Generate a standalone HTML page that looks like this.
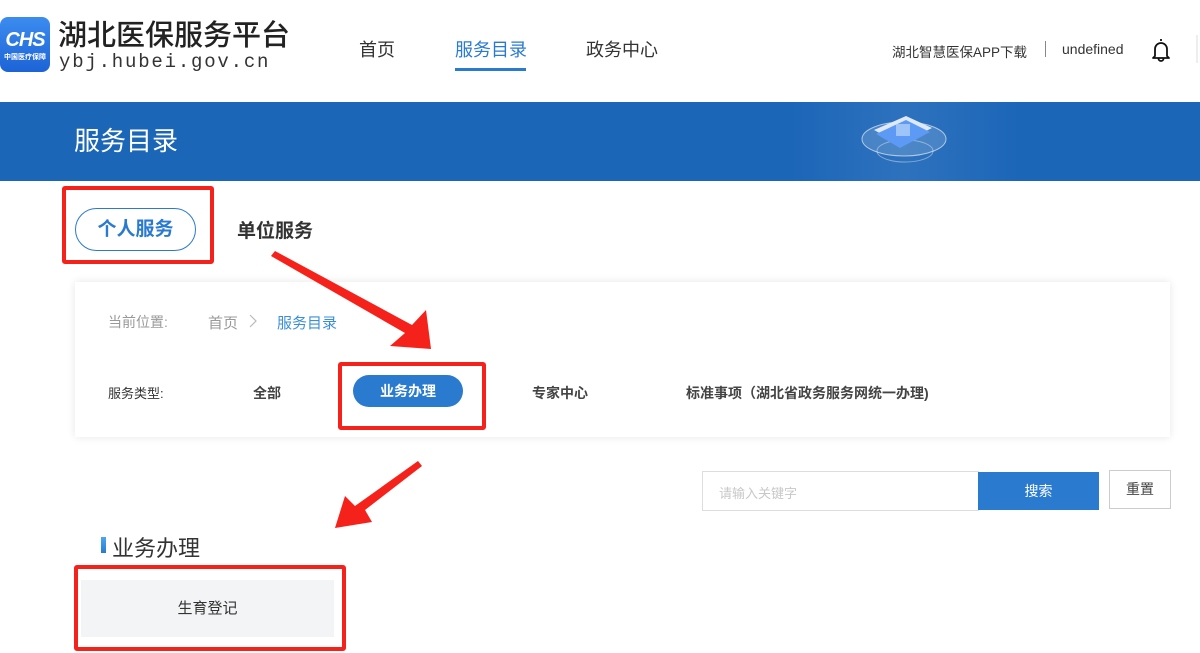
<!DOCTYPE html>
<html><head><meta charset="utf-8">
<style>
*{margin:0;padding:0;box-sizing:border-box}
body{width:1200px;height:653px;overflow:hidden;background:#fff;font-family:"Liberation Sans","Noto Sans CJK SC",sans-serif;position:relative;color:#333}
.a{position:absolute;white-space:nowrap}
.rb{position:absolute;border:4px solid #f5221b;border-radius:3px}
</style></head><body>
<div class="a" style="left:0;top:17px;width:50px;height:55px;border-radius:8px;background:linear-gradient(#3b8cf0,#1d63d6);color:#fff;text-align:center">
 <div style="font:italic 900 20px 'Liberation Sans',sans-serif;margin-top:12px;letter-spacing:-1px">CHS</div>
 <div style="font-size:7px;margin-top:0px;font-weight:bold">中国医疗保障</div>
</div>
<div class="a" style="left:58px;top:12px;font-size:29px;font-weight:500;color:#222;letter-spacing:0px">湖北医保服务平台</div>
<div class="a" style="left:59px;top:51px;font:19px 'Liberation Mono',monospace;color:#333;letter-spacing:1.8px">ybj.hubei.gov.cn</div>

<div class="a" style="left:359px;top:36px;font-size:18px;color:#333">首页</div>
<div class="a" style="left:455px;top:36px;font-size:18px;color:#2a7ad0">服务目录</div>
<div class="a" style="left:455px;top:68px;width:71px;height:3px;background:#2a7ad0"></div>
<div class="a" style="left:586px;top:36px;font-size:18px;color:#333">政务中心</div>

<div class="a" style="left:892px;top:41px;font-size:13.5px;color:#333">湖北智慧医保APP下载</div>
<div class="a" style="left:1045px;top:41px;width:1px;height:16px;background:#888"></div>
<div class="a" style="left:1062px;top:41px;font-size:14px;color:#333">undefined</div>
<svg class="a" style="left:1150px;top:37px" width="22" height="26" viewBox="0 0 22 26"><path d="M11 2v2M5 19V12a6 6 0 0 1 12 0v7l2 2H3z" fill="none" stroke="#111" stroke-width="1.8" stroke-linejoin="round"/><path d="M8.5 21.5a2.5 2.5 0 0 0 5 0" fill="none" stroke="#111" stroke-width="1.8"/></svg>
<div class="a" style="left:1196px;top:35px;width:2px;height:28px;background:#eee"></div>

<div class="a" style="left:0;top:102px;width:1200px;height:79px;background:#1c66b8;overflow:hidden">
 <div style="position:absolute;left:790px;top:0;width:230px;height:79px;background:linear-gradient(90deg,rgba(255,255,255,0),rgba(255,255,255,.08),rgba(255,255,255,0))"></div>
 <svg style="position:absolute;left:860px;top:12px" width="90" height="60" viewBox="0 0 90 60"><ellipse cx="44" cy="25" rx="42" ry="17" fill="rgba(255,255,255,.15)" stroke="rgba(255,255,255,.6)"/><ellipse cx="45" cy="37" rx="28" ry="11" fill="none" stroke="rgba(255,255,255,.4)"/><polygon points="14,16 46,2 72,14 40,30" fill="#dfe9fb"/><polygon points="16,20 46,6 70,18 40,34" fill="#5d9af5"/><rect x="36" y="10" width="14" height="12" fill="#bcd5fb" opacity=".7"/></svg>
</div>
<div class="a" style="left:74px;top:121px;font-size:26px;color:#fff">服务目录</div>

<div class="a" style="left:75px;top:208px;width:121px;height:43px;border:1px solid #2a7ad0;border-radius:22px;color:#2a7ad0;font-size:19px;font-weight:bold;text-align:center;line-height:41px">个人服务</div>
<div class="a" style="left:237px;top:216px;font-size:19px;font-weight:bold;color:#333">单位服务</div>
<div class="rb" style="left:62px;top:186px;width:152px;height:78px"></div>

<div class="a" style="left:75px;top:282px;width:1095px;height:155px;background:#fff;box-shadow:0 0 8px rgba(0,0,0,.1)"></div>
<div class="a" style="left:108px;top:312px;font-size:14px;color:#999">当前位置:</div>
<div class="a" style="left:208px;top:312px;font-size:15px;color:#999">首页</div>
<svg class="a" style="left:248px;top:314px" width="10" height="14"><path d="M2 1l6 6-6 6" fill="none" stroke="#bbb" stroke-width="1.2"/></svg>
<div class="a" style="left:277px;top:312px;font-size:15px;color:#3b8fd8">服务目录</div>
<div class="a" style="left:108px;top:383px;font-size:13px;color:#333">服务类型:</div>
<div class="a" style="left:253px;top:383px;font-size:14px;font-weight:bold;color:#444">全部</div>
<div class="a" style="left:353px;top:375px;width:110px;height:32px;border-radius:16px;background:#2a7ad0;color:#fff;font-size:14px;font-weight:bold;text-align:center;line-height:32px">业务办理</div>
<div class="rb" style="left:338px;top:362px;width:148px;height:68px"></div>
<div class="a" style="left:532px;top:383px;font-size:14px;font-weight:bold;color:#444">专家中心</div>
<div class="a" style="left:686px;top:383px;font-size:14px;font-weight:bold;color:#444">标准事项（湖北省政务服务网统一办理)</div>

<div class="a" style="left:702px;top:471px;width:277px;height:40px;border:1px solid #ddd;font-size:13px;color:#c8c8c8;padding:11px 16px">请输入关键字</div>
<div class="a" style="left:978px;top:472px;width:121px;height:38px;background:#2a7ad0;color:#fff;font-size:14px;text-align:center;line-height:38px">搜索</div>
<div class="a" style="left:1109px;top:470px;width:62px;height:39px;border:1px solid #ccc;font-size:14px;color:#444;text-align:center;line-height:37px">重置</div>

<div class="a" style="left:101px;top:537px;width:5px;height:16px;background:linear-gradient(#4aa8f0,#2a7ad0)"></div>
<div class="a" style="left:112px;top:531px;font-size:22px;color:#333">业务办理</div>
<div class="a" style="left:81px;top:580px;width:253px;height:57px;background:#f3f4f6;text-align:center;line-height:57px;font-size:15px;color:#333">生育登记</div>
<div class="rb" style="left:74px;top:565px;width:272px;height:86px"></div>

<svg class="a" style="left:0;top:0" width="1200" height="653">
<polygon points="271,256 275,251 412,325 426,310 431,349 390,346 405,333" fill="#f5221b"/>
<polygon points="418,461 422,466 365,510 372,522 335,528 345,496 355,506" fill="#f5221b"/>
</svg>
</body></html>
